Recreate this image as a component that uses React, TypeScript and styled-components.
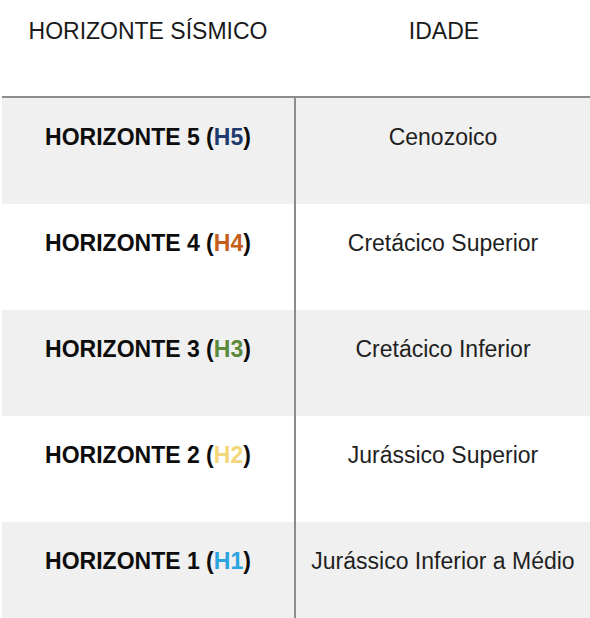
import React from "react";
import styled, { createGlobalStyle } from "styled-components";

const GlobalStyle = createGlobalStyle`
  html, body {
    margin: 0;
    padding: 0;
    background: #ffffff;
    overflow: hidden;
  }
  body {
    font-family: "Liberation Sans", Arial, sans-serif;
  }
`;

interface Horizon {
  num: number;
  color: string;
  age: string;
}

const horizons: Horizon[] = [
  { num: 5, color: "#1f3a6e", age: "Cenozoico" },
  { num: 4, color: "#c5601c", age: "Cretácico Superior" },
  { num: 3, color: "#5a8a3a", age: "Cretácico Inferior" },
  { num: 2, color: "#f3d77a", age: "Jurássico Superior" },
  { num: 1, color: "#2ba3de", age: "Jurássico Inferior a Médio" },
];

const Page = styled.div`
  width: 590px;
  height: 618px;
  padding-left: 2px;
  box-sizing: border-box;
  overflow: hidden;
`;

const Table = styled.div`
  display: grid;
  grid-template-columns: 292px 1fr;
`;

const HeadCell = styled.div<{ $right?: boolean }>`
  height: 98px;
  padding-top: 18px;
  box-sizing: border-box;
  text-align: center;
  font-size: 23px;
  line-height: 26px;
  color: #1a1a1a;
  border-bottom: 2px solid #8c8c8c;
  padding-left: ${(p) => (p.$right ? "4px" : "0")};
`;

const Cell = styled.div<{ $shaded: boolean; $right?: boolean }>`
  height: 106px;
  box-sizing: border-box;
  padding-top: 26px;
  text-align: center;
  font-size: 23px;
  line-height: 26px;
  background: ${(p) => (p.$shaded ? "#f0f0f0" : "#ffffff")};
  border-left: ${(p) => (p.$right ? "2px solid #8c8c8c" : "none")};
  color: ${(p) => (p.$right ? "#1f1f1f" : "#0d0d0d")};
  font-weight: ${(p) => (p.$right ? 400 : 700)};
`;

const Tag = styled.span<{ $color: string }>`
  color: ${(p) => p.$color};
`;

export default function App() {
  return (
    <Page>
      <GlobalStyle />
      <Table>
        <HeadCell>HORIZONTE SÍSMICO</HeadCell>
        <HeadCell $right>IDADE</HeadCell>
        {horizons.map((h, i) => (
          <React.Fragment key={h.num}>
            <Cell $shaded={i % 2 === 0}>
              HORIZONTE {h.num} (<Tag $color={h.color}>H{h.num}</Tag>)
            </Cell>
            <Cell $shaded={i % 2 === 0} $right>
              {h.age}
            </Cell>
          </React.Fragment>
        ))}
      </Table>
    </Page>
  );
}
